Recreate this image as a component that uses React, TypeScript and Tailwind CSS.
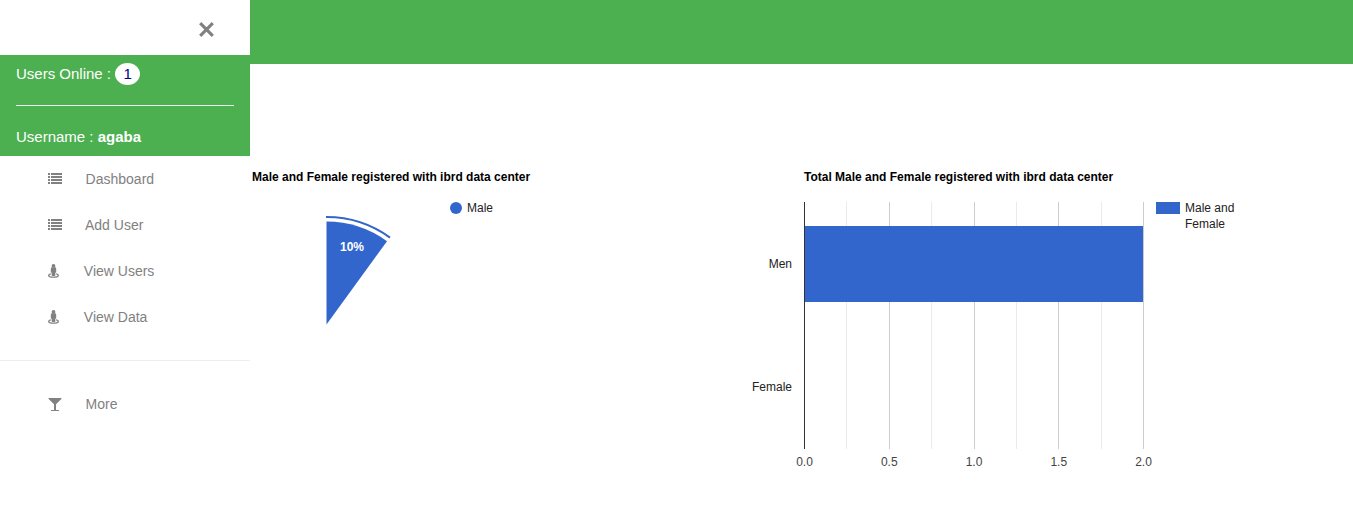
import React from "react";

const ListIcon = () => (
  <svg width="14" height="14" viewBox="0 0 14 14" fill="#818181" shapeRendering="crispEdges">
    {[1, 4, 7, 10].map((y) => (
      <g key={y}>
        <rect x="0" y={y} width="2" height="2" />
        <rect x="3" y={y} width="11" height="2" />
      </g>
    ))}
  </svg>
);

const StreetViewIcon = () => (
  <svg width="12" height="14" viewBox="0 0 12 14" fill="#818181">
    <circle cx="5.5" cy="1.9" r="1.9" />
    <path d="M4.3 3.3h2.4q1.5 0 1.5 1.4v3.3q0 .7-.9.7v2.6q0 .7-.7.7H4.4q-.7 0-.7-.7V8.7q-.9 0-.9-.7V4.7q0-1.4 1.5-1.4Z" />
    <path
      d="M3 9.9C1.3 10.2.7 10.7.7 11.4c0 1 2.1 1.7 4.8 1.7s4.8-.7 4.8-1.7c0-.7-.6-1.2-2.3-1.5"
      fill="none"
      stroke="#818181"
      strokeWidth="1.4"
    />
  </svg>
);

const GlassIcon = () => (
  <svg width="14" height="14" viewBox="0 0 14 14" fill="#818181">
    <path d="M.7 1h12.6q.5.3 0 .9L8 7.2V13h2.7q.4 0 .4.5v.5H2.9v-.5q0-.5.4-.5H6V7.2L.7 1.9Q.2 1.3.7 1Z" />
  </svg>
);

const items = [
  { label: "Dashboard", icon: <ListIcon />, pad: "pl-[23.6px]" },
  { label: "Add User", icon: <ListIcon />, pad: "pl-[23px]" },
  { label: "View Users", icon: <StreetViewIcon />, pad: "pl-[23.8px]" },
  { label: "View Data", icon: <StreetViewIcon />, pad: "pl-[23.8px]" },
];

function Sidebar() {
  return (
    <aside className="flex h-full w-[250px] shrink-0 flex-col bg-white">
      <div className="flex h-[55px] items-start justify-end pt-[22px] pr-9">
        <button aria-label="Close" className="block">
          <svg width="15" height="15" viewBox="0 0 15 15" stroke="#818181" strokeWidth="3.1">
            <path d="M1.2 1.2l12.6 12.6M13.8 1.2L1.2 13.8" />
          </svg>
        </button>
      </div>
      <div className="h-[101px] bg-[#4caf50] px-4 pt-2 text-[15px] leading-[22px] text-white">
        <div className="flex gap-1">
          <span>Users Online :</span>
          <span className="h-[22px] w-[25px] rounded-[50%] bg-white text-center text-[#000080]">1</span>
        </div>
        <hr className="mt-5 border-t border-[#eeeeee]" />
        <div className="mt-5">
          Username : <b>agaba</b>
        </div>
      </div>
      <nav className="text-sm text-[#818181]">
        {items.map((item) => (
          <a key={item.label} className="flex h-[46px] items-center pl-12">
            {item.icon}
            <span className={item.pad}>{item.label}</span>
          </a>
        ))}
        <hr className="mt-5 border-t border-[#eeeeee]" />
        <a className="mt-5 flex h-[46px] items-center pl-12">
          <GlassIcon />
          <span className="pl-[23.6px]">More</span>
        </a>
      </nav>
    </aside>
  );
}

function PieChart() {
  return (
    <svg width="450" height="370" viewBox="250 140 450 370" fontSize="12" className="shrink-0">
      <text x="252" y="181" fontWeight="bold" fill="#000">Male and Female registered with ibrd data center</text>
      <circle cx="456" cy="208" r="6" fill="#3366cc" />
      <text x="467" y="212" fill="#222">Male</text>
      <path d="M326.5 324.5V221.5A103 103 0 0 1 387 241.2Z" fill="#3366cc" />
      <path d="M326 217A108 108 0 0 1 390 237.6" fill="none" stroke="#3366cc" strokeWidth="2" />
      <text x="340" y="251" fontWeight="bold" fill="#fff">10%</text>
    </svg>
  );
}

const majorLines = [889, 974, 1058, 1143];
const minorLines = [846, 931, 1016, 1101];
const ticks = [
  { x: 804.5, label: "0.0" },
  { x: 889.25, label: "0.5" },
  { x: 974, label: "1.0" },
  { x: 1058.75, label: "1.5" },
  { x: 1143.5, label: "2.0" },
];

function BarChart() {
  return (
    <svg width="653" height="370" viewBox="700 140 653 370" fontSize="12" className="shrink-0">
      <text x="804" y="181" fontWeight="bold" fill="#000">Total Male and Female registered with ibrd data center</text>
      {minorLines.map((x) => (
        <rect key={x} x={x} y="202" width="1" height="247" fill="#ebebeb" />
      ))}
      {majorLines.map((x) => (
        <rect key={x} x={x} y="202" width="1" height="247" fill="#cccccc" />
      ))}
      <rect x="805" y="226" width="338" height="76" fill="#3366cc" />
      <rect x="804" y="202" width="1" height="247" fill="#333333" />
      <g textAnchor="end" fill="#222">
        <text x="792" y="268">Men</text>
        <text x="792" y="391">Female</text>
      </g>
      <g textAnchor="middle" fill="#444">
        {ticks.map((t) => (
          <text key={t.label} x={t.x} y="466">{t.label}</text>
        ))}
      </g>
      <rect x="1156" y="202" width="24" height="12" fill="#3366cc" />
      <g fill="#222">
        <text x="1185" y="212">Male and</text>
        <text x="1185" y="228">Female</text>
      </g>
    </svg>
  );
}

export default function App() {
  return (
    <div className="flex h-[530px] w-[1353px] overflow-hidden bg-white font-['Liberation_Sans',Arial,sans-serif]">
      <Sidebar />
      <main className="min-w-0 flex-1">
        <header className="h-16 bg-[#4caf50]" />
        <section className="flex pt-[76px]">
          <PieChart />
          <BarChart />
        </section>
      </main>
    </div>
  );
}
